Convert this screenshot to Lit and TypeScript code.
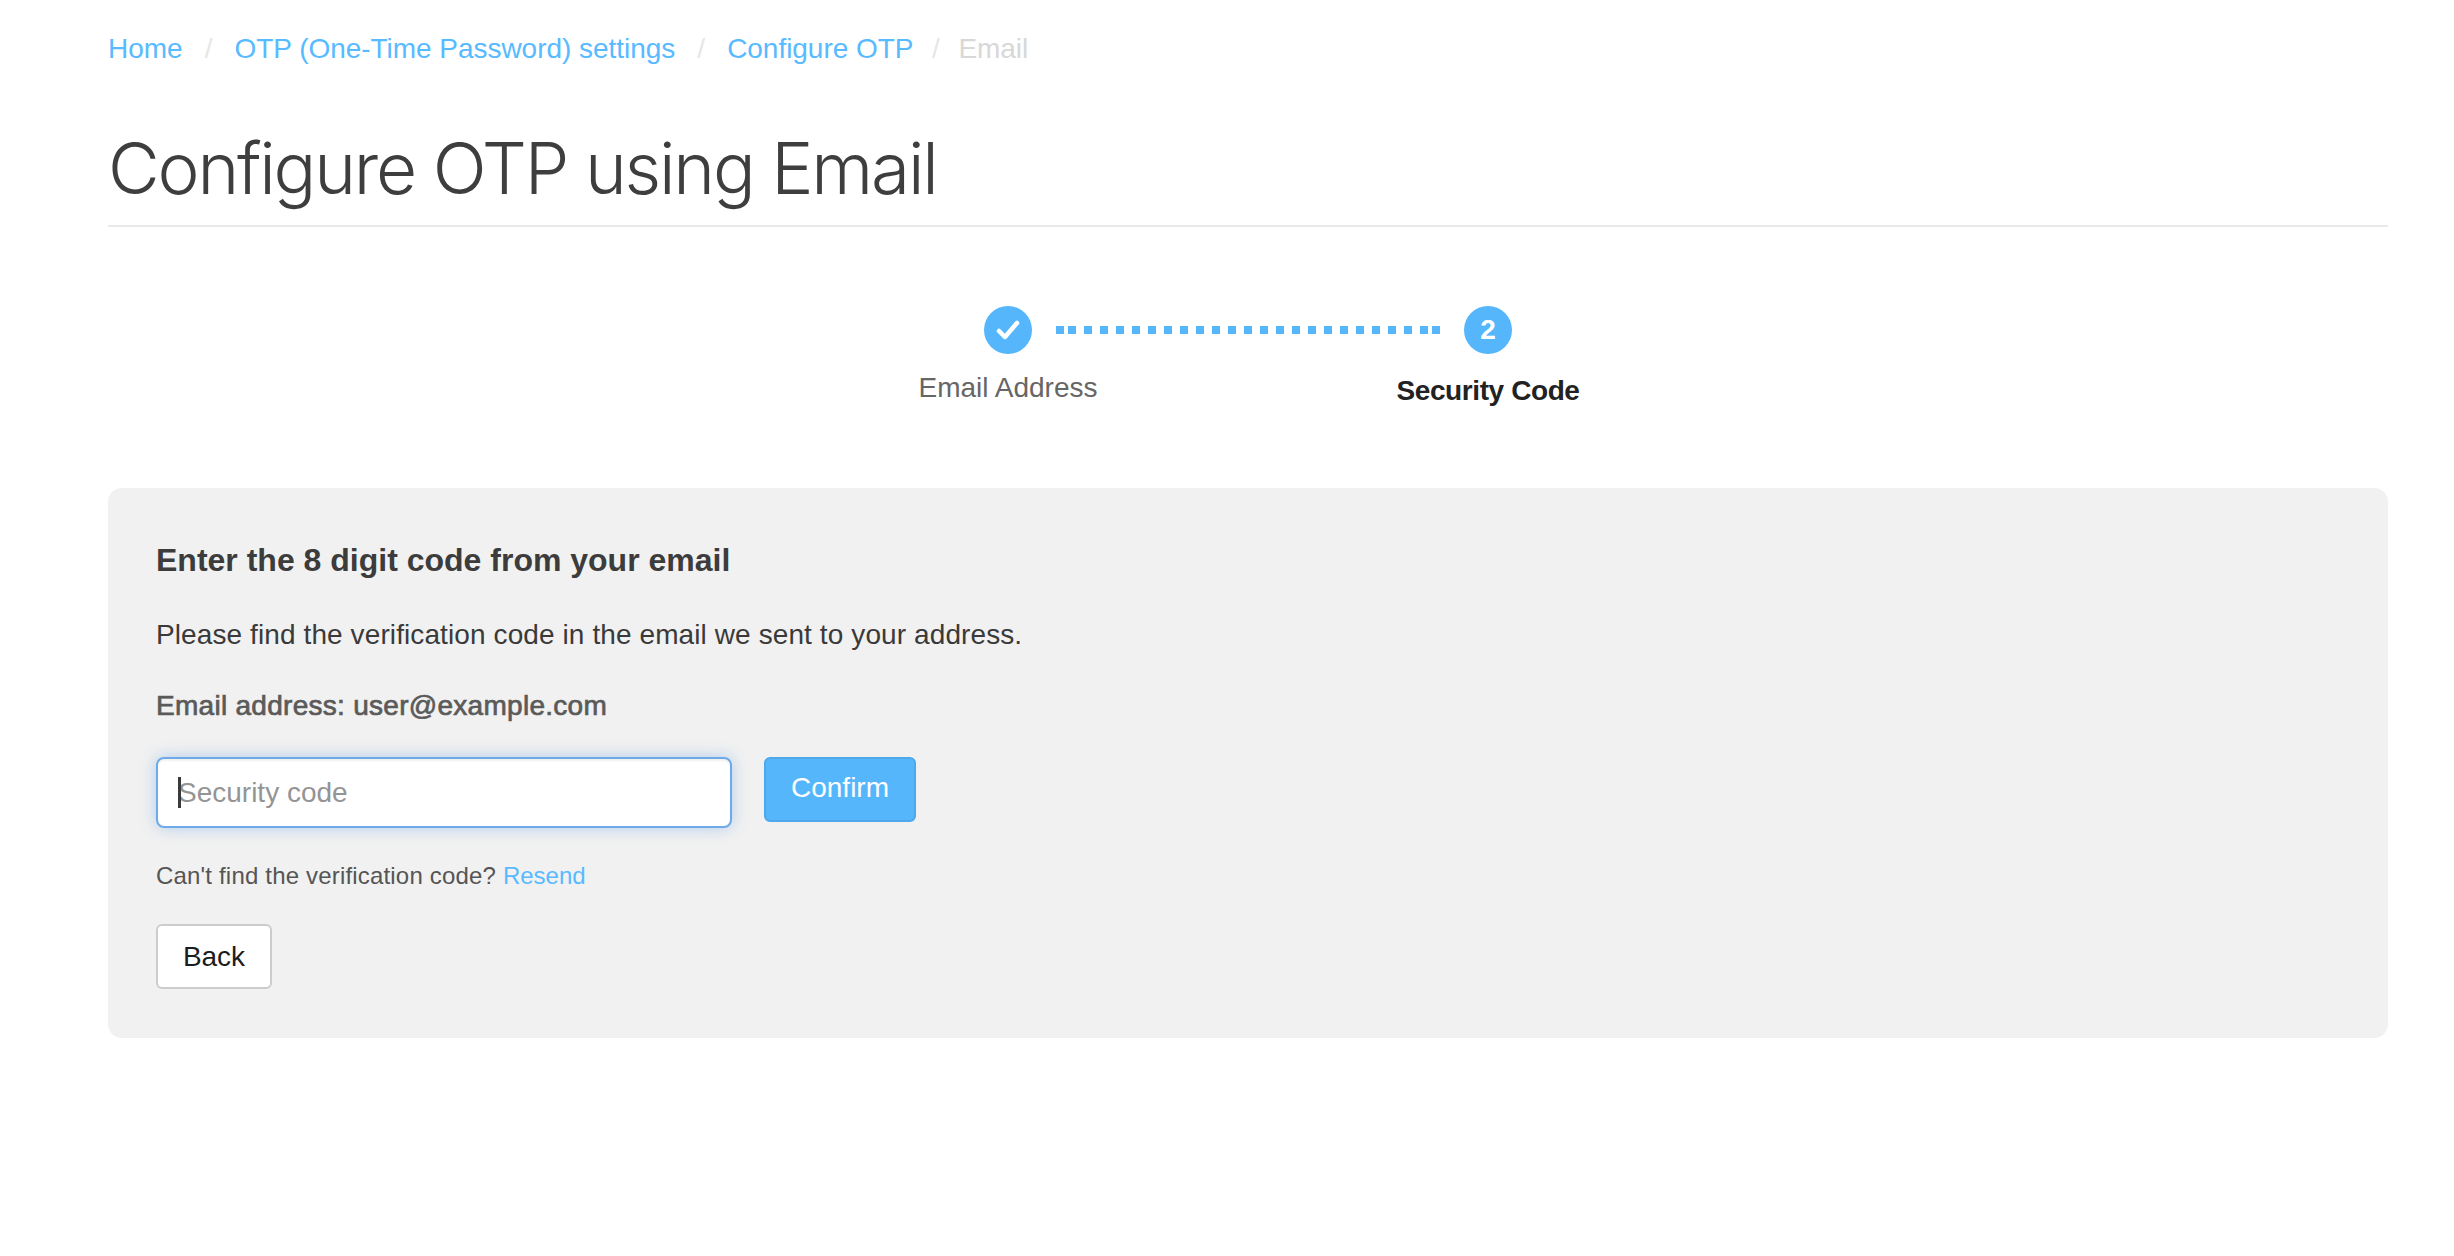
import { LitElement, html, css } from "lit";
import { customElement } from "lit/decorators.js";

@customElement("app-root")
export class AppRoot extends LitElement {
  static styles = css`
    :host {
      display: block;
      box-sizing: border-box;
      min-height: 1256px;
      padding: 33px 66px 0 108px;
      background: #fff;
      font-family: "Liberation Sans", Arial, sans-serif;
      color: #333;
    }
    a { color: #58baff; text-decoration: none; }
    .crumbs {
      display: flex;
      align-items: center;
      height: 32px;
      font-size: 28px;
      line-height: 32px;
      letter-spacing: -0.04px;
    }
    .sep { color: #e6e6e6; width: 52px; text-align: center; }
    .sep.last { width: 45px; }
    .current { color: #d8d8d8; }
    h1 {
      margin: 55px 0 0;
      height: 96px;
      font-family: Inter, "Liberation Sans", sans-serif;
      font-size: 71px;
      line-height: 96px;
      font-weight: 300;
      letter-spacing: -2.2px;
      color: #3e3e3e;
      border-bottom: 2px solid #e9e9e9;
      padding-bottom: 9px;
      box-sizing: content-box;
    }
    .stepper {
      display: grid;
      grid-template-columns: 48px 384px 48px;
      column-gap: 24px;
      justify-content: center;
      align-items: center;
      margin-top: 79px;
      row-gap: 16px;
    }
    .dot {
      width: 48px;
      height: 48px;
      border-radius: 50%;
      background: #55b6fc;
      color: #fff;
      font-size: 28px;
      font-weight: 700;
      display: flex;
      align-items: center;
      justify-content: center;
    }
    .line {
      height: 8px;
      background:
        linear-gradient(#55b6fc, #55b6fc) 0 0 / 8px 8px no-repeat,
        linear-gradient(#55b6fc, #55b6fc) 100% 0 / 8px 8px no-repeat,
        repeating-linear-gradient(90deg, #55b6fc 0 8px, transparent 8px 16px) 12px 0 / 360px 8px no-repeat;
    }
    .label {
      grid-row: 2;
      justify-self: center;
      white-space: nowrap;
      font-size: 28px;
      line-height: 34px;
    }
    .label.done { grid-column: 1; color: #666; }
    .label.active {
      grid-column: 3;
      color: #222;
      font-weight: 700;
      padding-top: 4px;
      margin-bottom: -2px;
      letter-spacing: -0.4px;
    }
    .panel {
      margin-top: 82px;
      background: #f1f1f1;
      border-radius: 14px;
      padding: 54px 48px 49px;
      box-sizing: border-box;
    }
    h2 {
      margin: 0;
      font-size: 32px;
      line-height: 36px;
      font-weight: 700;
      color: #3c3c3c;
    }
    .info {
      margin: 39px 0 0;
      font-size: 28px;
      line-height: 36px;
      color: #3a3a3a;
      letter-spacing: 0.1px;
    }
    .email {
      margin: 35px 0 0;
      font-size: 28px;
      line-height: 36px;
      color: #5a5a5a;
      letter-spacing: 0.28px;
      -webkit-text-stroke: 0.7px #5a5a5a;
    }
    .row {
      display: flex;
      align-items: flex-start;
      gap: 32px;
      margin-top: 33px;
    }
    .field {
      position: relative;
      width: 576px;
      height: 71px;
    }
    input {
      display: block;
      width: 100%;
      height: 100%;
      box-sizing: border-box;
      border: 2px solid #6eaae8;
      border-radius: 8px;
      background: #fff;
      padding: 0 20px;
      font: 28px "Liberation Sans", Arial, sans-serif;
      color: #333;
      outline: none;
      box-shadow: inset 0 2px 2px rgba(0,0,0,.06), 0 0 16px rgba(102,160,230,.45);
    }
    input::placeholder { color: #949494; opacity: 1; }
    .caret {
      position: absolute;
      left: 22px;
      top: 20px;
      width: 3px;
      height: 31px;
      background: #3a3a3a;
    }
    .btn {
      box-sizing: border-box;
      height: 65px;
      border-radius: 6px;
      font: 28px "Liberation Sans", Arial, sans-serif;
      padding: 0;
      display: block;
    }
    .confirm {
      width: 152px;
      background: #55b6fc;
      border: 2px solid #4ea8ea;
      color: #fff;
      padding-bottom: 3px;
    }
    .resend {
      margin: 33px 0 0;
      font-size: 24px;
      line-height: 30px;
      color: #555;
      letter-spacing: 0.18px;
    }
    .resend a { letter-spacing: 0; }
    .back {
      width: 116px;
      margin-top: 33px;
      background: #fff;
      border: 2px solid #ccc;
      color: #1c1c1c;
    }
  `;

  render() {
    return html`
      <nav class="crumbs">
        <a href="#">Home</a><span class="sep">/</span>
        <a href="#">OTP (One-Time Password) settings</a><span class="sep">/</span>
        <a href="#">Configure OTP</a><span class="sep last">/</span>
        <span class="current">Email</span>
      </nav>
      <h1>Configure OTP using Email</h1>
      <div class="stepper">
        <div class="dot">
          <svg width="26" height="22" viewBox="0 0 26 22" fill="none" stroke="#fff" stroke-width="4.5" stroke-linecap="round" stroke-linejoin="round">
            <path d="M4 12 L10 18 L22 4"></path>
          </svg>
        </div>
        <div class="line"></div>
        <div class="dot">2</div>
        <div class="label done">Email Address</div>
        <div class="label active">Security Code</div>
      </div>
      <section class="panel">
        <h2>Enter the 8 digit code from your email</h2>
        <p class="info">Please find the verification code in the email we sent to your address.</p>
        <p class="email">Email address: user@example.com</p>
        <div class="row">
          <div class="field">
            <input type="text" placeholder="Security code" />
            <span class="caret"></span>
          </div>
          <button class="btn confirm">Confirm</button>
        </div>
        <p class="resend">Can't find the verification code? <a href="#">Resend</a></p>
        <button class="btn back">Back</button>
      </section>
    `;
  }
}
